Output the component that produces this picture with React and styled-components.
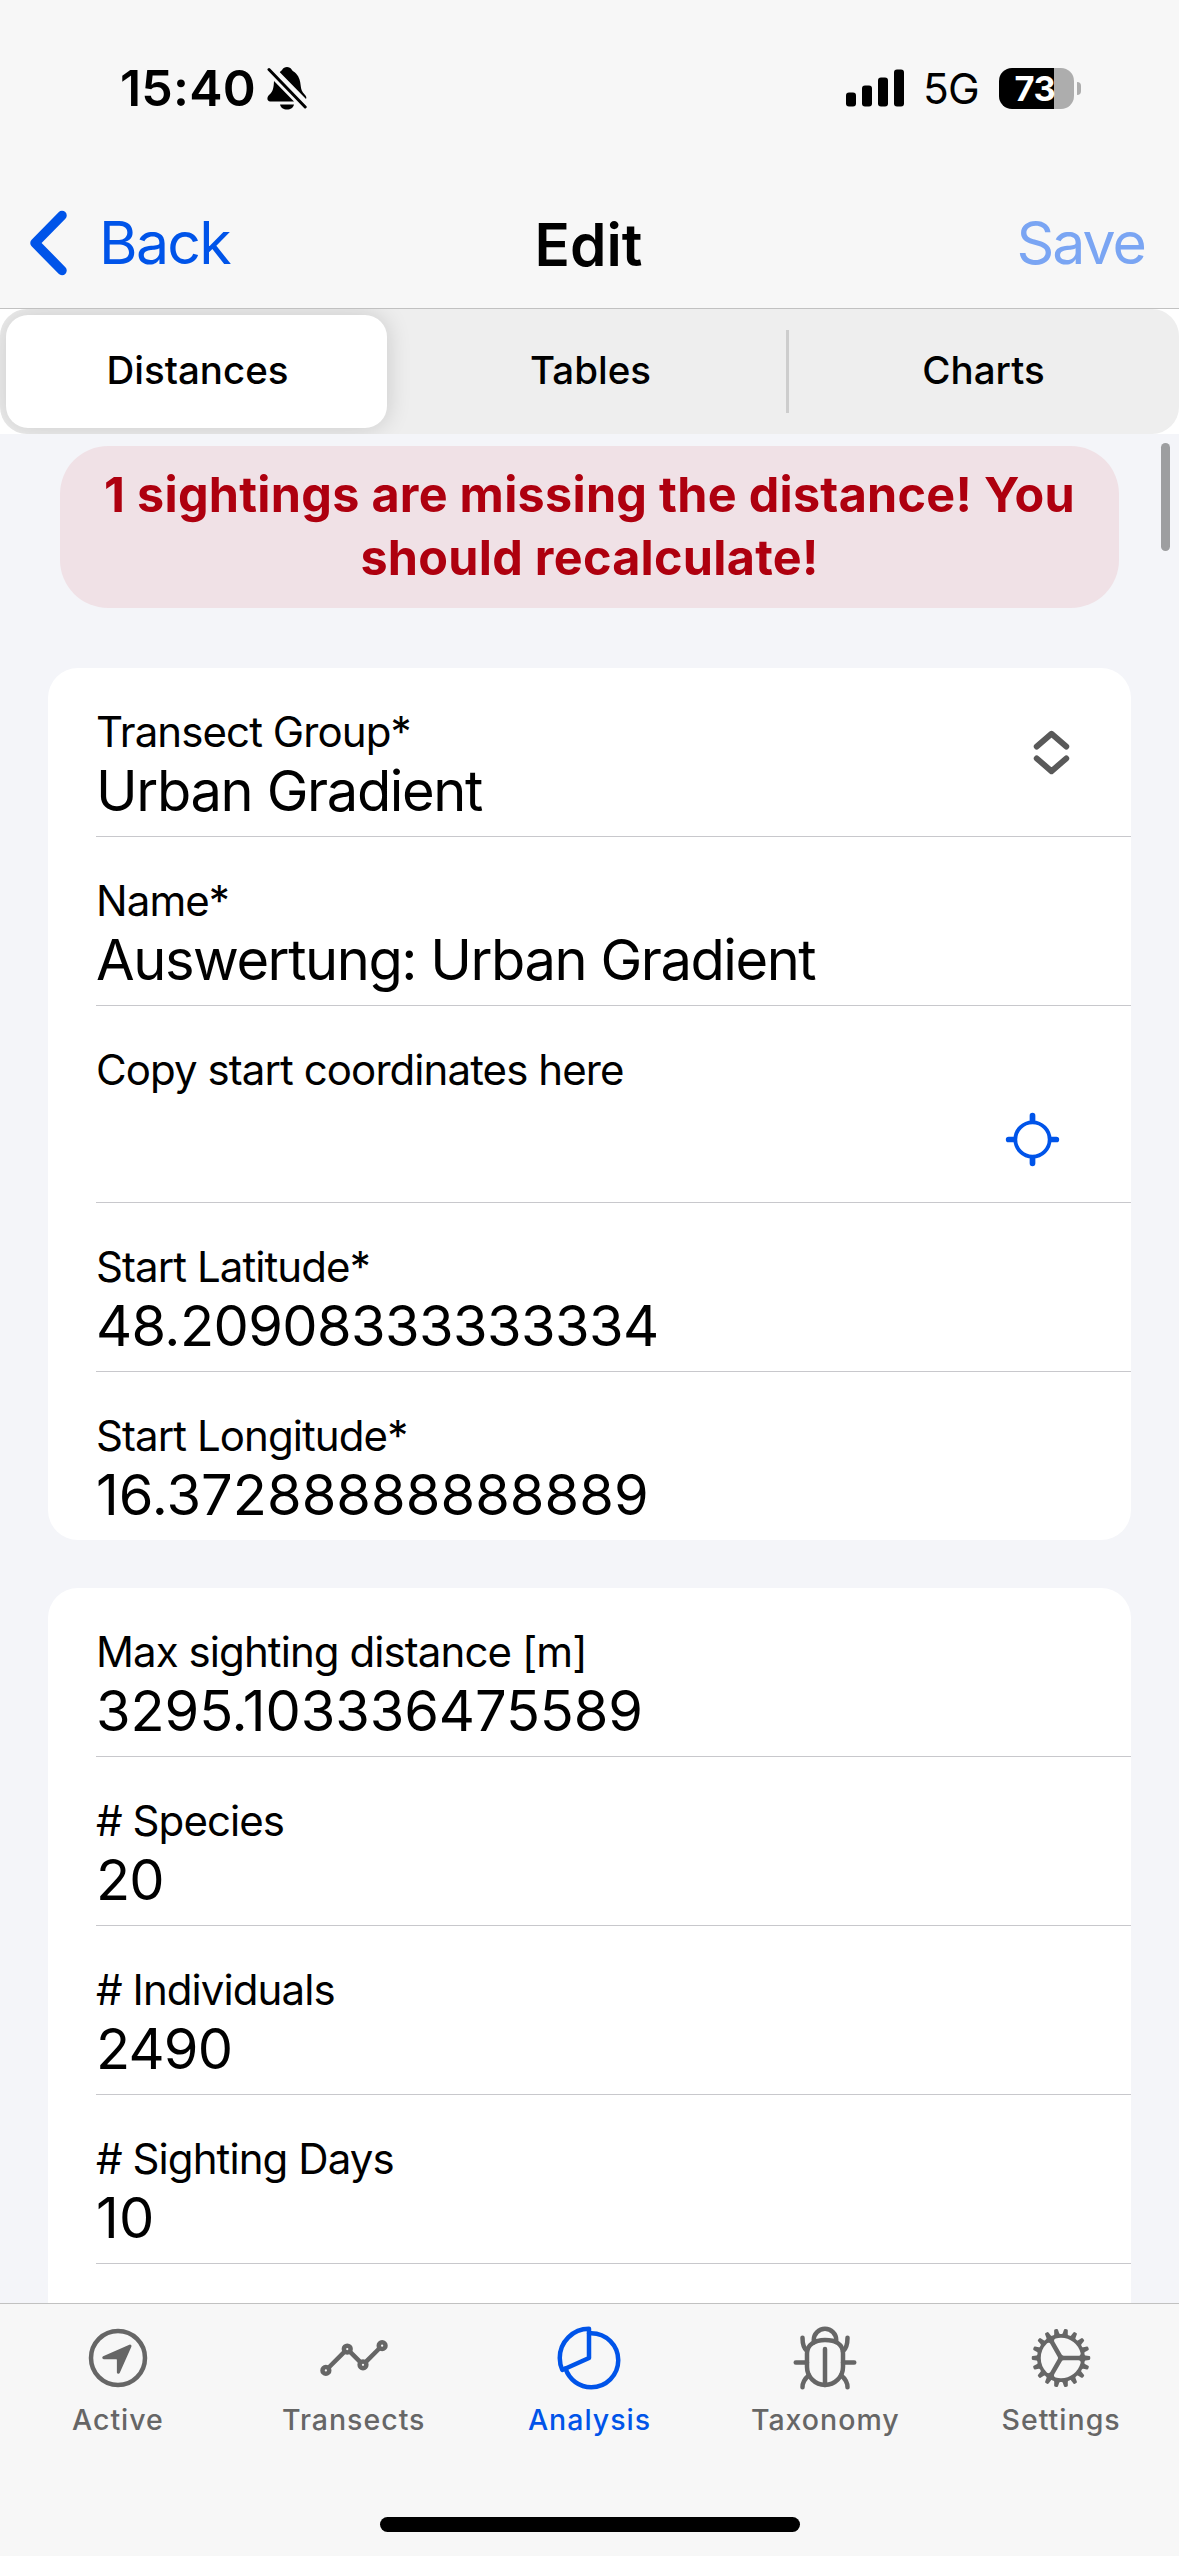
import React, { useState } from "react";
import styled, { createGlobalStyle } from "styled-components";
import {
  IoNavigateCircleOutline,
  IoAnalyticsOutline,
  IoPieChartOutline,
  IoBugOutline,
  IoCogOutline,
  IoLocateOutline,
} from "react-icons/io5";

const GlobalStyle = createGlobalStyle`
  * {
    box-sizing: border-box;
  }

  body {
    margin: 0;
    background: #f4f5f9;
    color: #000;
    font-family: Inter, "Liberation Sans", sans-serif;
    -webkit-font-smoothing: antialiased;
  }

  button {
    margin: 0;
    padding: 0;
    border: none;
    background: none;
    font: inherit;
    color: inherit;
  }
`;

const Page = styled.div`
  width: 1179px;
  height: 2556px;
  display: flex;
  flex-direction: column;
  overflow: hidden;
`;

const Header = styled.header`
  flex: none;
  height: 309px;
  background: #f7f7f7;
  border-bottom: 1px solid #c1c1c1;
`;

const StatusBar = styled.div`
  height: 176px;
  padding: 0 98px 0 120px;
  display: flex;
  align-items: center;
  justify-content: space-between;
`;

const StatusGroup = styled.div`
  display: flex;
  align-items: center;
`;

const Clock = styled.span`
  width: 147px;
  font-size: 50px;
  font-weight: 600;
  line-height: 60px;
  letter-spacing: 0.2px;
`;

const Network = styled.span`
  margin: 2px 0 0 19px;
  width: 76px;
  font-size: 42.5px;
  line-height: 52px;
  letter-spacing: -0.8px;
`;

const Battery = styled.div`
  width: 75px;
  height: 41px;
  border-radius: 13px;
  display: flex;
  align-items: center;
  justify-content: center;
  background: linear-gradient(to right, #000 55px, #adadad 55px);
  color: #fff;
  font-size: 34.5px;
  font-weight: 700;
  line-height: 41px;
  letter-spacing: -0.5px;
  padding-right: 3px;
`;

const BatteryTip = styled.div`
  width: 4px;
  height: 13px;
  margin-left: 3px;
  border-radius: 0 4px 4px 0;
  background: #adadad;
`;

const Toolbar = styled.div`
  height: 132px;
  padding: 2px 34px 0 30px;
  display: grid;
  grid-template-columns: 1fr auto 1fr;
  align-items: center;
`;

const BackButton = styled.button`
  display: flex;
  align-items: center;
  gap: 27px;
  justify-self: start;
  color: #0054e9;
  font-size: 59px;
  line-height: 72px;
  letter-spacing: -1.7px;
`;

const Title = styled.h1`
  margin: 3px 0 0 2px;
  font-size: 58.5px;
  font-weight: 600;
  line-height: 72px;
`;

const SaveButton = styled.button`
  justify-self: end;
  color: #7aa5f3;
  font-size: 59px;
  line-height: 72px;
  letter-spacing: -2px;
`;

const SegmentWrap = styled.div`
  flex: none;
  height: 125px;
  background: #fff;
`;

const Segment = styled.div`
  height: 125px;
  display: grid;
  grid-template-columns: repeat(3, 1fr);
  border-radius: 27px;
  background: #eeeeee;
  overflow: hidden;
`;

const SegmentButton = styled.button`
  margin: 6px;
  padding: 0 0 2px 2px;
  border-radius: 22px;
  font-size: 38.5px;
  font-weight: 450;
  line-height: 111px;
  background: ${({ $active }) => ($active ? "#fff" : "transparent")};
  box-shadow: ${({ $active }) => ($active ? "0 0 24px rgba(0, 0, 0, 0.16)" : "none")};
`;

const SegmentCell = styled.div`
  display: grid;
  background: ${({ $divider }) =>
    $divider ? "linear-gradient(#cdcdcd, #cdcdcd) left 0 top 21px / 3px 83px no-repeat" : "none"};
`;

const Content = styled.main`
  flex: 1;
  min-height: 0;
  position: relative;
  padding: 12px 48px 0;
  overflow: hidden;
  background: #f4f5f9;
`;

const ScrollThumb = styled.div`
  position: absolute;
  top: 9px;
  right: 9px;
  width: 9px;
  height: 108px;
  border-radius: 5px;
  background: #9d9ea0;
`;

const Warning = styled.div`
  margin: 0 12px 60px;
  height: 162px;
  padding: 17px 20px 0;
  border-radius: 48px;
  background: #f0e1e6;
  color: #ae000f;
  font-size: 48.5px;
  font-weight: 700;
  line-height: 63px;
  letter-spacing: 0.28px;
  text-align: center;
`;

const Card = styled.section`
  margin-bottom: 48px;
  padding-left: 48px;
  border-radius: 30px;
  background: #fff;
`;

const Row = styled.div`
  height: ${({ $tall }) => ($tall ? "197px" : "169px")};
  padding-right: 48px;
  display: flex;
  justify-content: space-between;
  border-bottom: 1px solid #c8c8cc;

  &:last-child {
    height: 168px;
    border-bottom: none;
  }
`;

const Field = styled.div`
  padding-top: 38px;
  white-space: nowrap;
`;

const Label = styled.div`
  font-size: 42px;
  line-height: 52px;
  letter-spacing: -0.92px;
`;

const Value = styled.div`
  font-size: 56px;
  line-height: 66px;
  letter-spacing: ${({ $tracking = -0.8 }) => `${$tracking}px`};
`;

const Accessory = styled.div`
  display: flex;
  align-items: ${({ $bottom }) => ($bottom ? "flex-end" : "center")};
  padding: ${({ $bottom }) => ($bottom ? "0 20px 32px 0" : "0")};
  color: ${({ $bottom }) => ($bottom ? "#0054e9" : "#595959")};
`;

const TabBar = styled.nav`
  flex: none;
  height: 253px;
  border-top: 1px solid #c1c1c1;
  background: #f7f7f7;
`;

const Tabs = styled.div`
  height: 213px;
  display: grid;
  grid-template-columns: repeat(5, 1fr);
`;

const Tab = styled.button`
  padding-top: 18px;
  display: flex;
  flex-direction: column;
  align-items: center;
  color: ${({ $active }) => ($active ? "#0054e9" : "#666666")};
  font-size: 28.5px;
  font-weight: 500;
  line-height: 36px;
  letter-spacing: 1px;

  span {
    margin-top: 8px;
  }
`;

const HomeIndicator = styled.div`
  width: 420px;
  height: 15px;
  margin: 0 auto;
  border-radius: 8px;
  background: #000;
`;

const segments = ["Distances", "Tables", "Charts"];

const transectFields = [
  { label: "Transect Group*", value: "Urban Gradient", icon: "expand", tracking: -1.35 },
  { label: "Name*", value: "Auswertung: Urban Gradient", tracking: -1.43 },
  { label: "Copy start coordinates here", value: "", icon: "locate" },
  { label: "Start Latitude*", value: "48.20908333333334", tracking: -0.6 },
  { label: "Start Longitude*", value: "16.37288888888889", tracking: 0.05 },
];

const statFields = [
  { label: "Max sighting distance [m]", value: "3295.103336475589", tracking: -0.1 },
  { label: "# Species", value: "20" },
  { label: "# Individuals", value: "2490" },
  { label: "# Sighting Days", value: "10", tracking: 0.2 },
  { label: "", value: "" },
];

const tabs = [
  { label: "Active", Icon: IoNavigateCircleOutline },
  { label: "Transects", Icon: IoAnalyticsOutline },
  { label: "Analysis", Icon: IoPieChartOutline },
  { label: "Taxonomy", Icon: IoBugOutline },
  { label: "Settings", Icon: IoCogOutline },
];

const SilentBell = () => (
  <svg width="40" height="44" viewBox="0 0 40 44">
    <path d="M12.8 6.2C14 4.8 14.800 4.500 15.200 3.800 16.200 2 18 1 20 1s3.800 1 4.800 2.800c.8 1.400 2.400 1.800 4.200 3.600C32.500 11 33.200 15 33.600 19c.4 4.500 1.400 7 4 9.400 1.700 1.600 2.200 3.400 1.400 4.600Z" />
    <path d="M7 15 27 35.500H3.200C1.400 35.500.4 34.300.4 32.600c0-1.800.9-3 2.400-4.400C5.800 25.500 6.700 22 7 15Z" />
    <path d="M13 38.500h14c-.6 3-3.400 5-7 5s-6.400-2-7-5Z" />
    <path d="M2 3.500 38.500 41" stroke="#f7f7f7" strokeWidth="6.500" />
    <path d="M2 3.500 38.200 41" stroke="#000" strokeWidth="3" strokeLinecap="round" />
  </svg>
);

const Signal = () => (
  <svg width="58" height="38" viewBox="0 0 58 38">
    <rect x="0" y="23.500" width="10" height="14" rx="3" />
    <rect x="16" y="16.500" width="10" height="21" rx="3" />
    <rect x="32" y="8.500" width="10" height="29" rx="3" />
    <rect x="48" y="0.500" width="10" height="37" rx="3" />
  </svg>
);

const BackChevron = () => (
  <svg width="42" height="66" viewBox="0 0 42 66" fill="none">
    <path d="M32 5.500 5 33l27 27.500" stroke="currentColor" strokeWidth="9.500" strokeLinecap="round" strokeLinejoin="round" />
  </svg>
);

const ExpandIcon = () => (
  <svg width="63" height="63" viewBox="0 0 512 512" fill="none">
    <path
      d="M136 208l120-104 120 104M136 304l120 104 120-104"
      stroke="currentColor"
      strokeWidth="48"
      strokeLinecap="round"
      strokeLinejoin="round"
    />
  </svg>
);

const FieldRow = ({ label, value, icon, tracking }) => (
  <Row $tall={icon === "locate"}>
    <Field>
      <Label>{label}</Label>
      <Value $tracking={tracking}>{value}</Value>
    </Field>
    {icon === "expand" && (
      <Accessory>
        <ExpandIcon />
      </Accessory>
    )}
    {icon === "locate" && (
      <Accessory $bottom>
        <IoLocateOutline size={61} />
      </Accessory>
    )}
  </Row>
);

const App = () => {
  const [segment, setSegment] = useState("Distances");
  const [tab, setTab] = useState("Analysis");

  return (
    <Page>
      <GlobalStyle />
      <Header>
        <StatusBar>
          <StatusGroup>
            <Clock>15:40</Clock>
            <SilentBell />
          </StatusGroup>
          <StatusGroup>
            <Signal />
            <Network>5G</Network>
            <Battery>73</Battery>
            <BatteryTip />
          </StatusGroup>
        </StatusBar>
        <Toolbar>
          <BackButton>
            <BackChevron />
            Back
          </BackButton>
          <Title>Edit</Title>
          <SaveButton disabled>Save</SaveButton>
        </Toolbar>
      </Header>

      <SegmentWrap>
        <Segment>
          {segments.map((name, i) => (
            <SegmentCell key={name} $divider={i === 2}>
              <SegmentButton $active={segment === name} onClick={() => setSegment(name)}>
                {name}
              </SegmentButton>
            </SegmentCell>
          ))}
        </Segment>
      </SegmentWrap>

      <Content>
        <Warning>1 sightings are missing the distance! You should recalculate!</Warning>
        <Card>
          {transectFields.map((field) => (
            <FieldRow key={field.label} {...field} />
          ))}
        </Card>
        <Card>
          {statFields.map((field) => (
            <FieldRow key={field.label} {...field} />
          ))}
        </Card>
        <ScrollThumb />
      </Content>

      <TabBar>
        <Tabs>
          {tabs.map(({ label, Icon }) => (
            <Tab key={label} $active={tab === label} onClick={() => setTab(label)}>
              <Icon size={72} />
              <span>{label}</span>
            </Tab>
          ))}
        </Tabs>
        <HomeIndicator />
      </TabBar>
    </Page>
  );
};

export default App;
